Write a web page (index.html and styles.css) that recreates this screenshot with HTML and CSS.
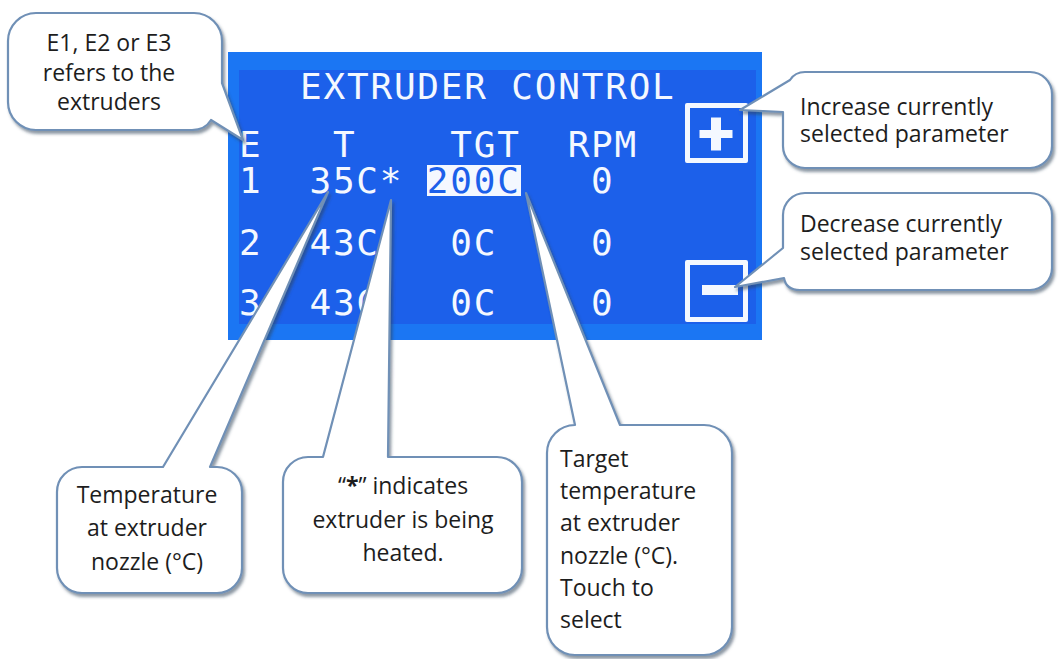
FILE: index.html
```html
<!DOCTYPE html>
<html>
<head>
<meta charset="utf-8">
<link rel="stylesheet" href="styles.css">
</head>
<body>
<div class="canvas">
  <div class="screen">
    <div class="panel">
      <div class="title">EXTRUDER CONTROL</div>
      <div class="body">
        <div class="table">
          <div class="row head">E   T    TGT  RPM</div>
          <div class="row r1">1  35C* <span class="sel">200C</span>   0</div>
          <div class="row r2">2  43C   0C    0</div>
          <div class="row r3">3  43C   0C    0</div>
        </div>
        <div class="keys">
          <div class="key plus">
            <svg width="53" height="50" viewBox="0 0 53 50"><rect x="9.5" y="22" width="33" height="8" fill="#f4f8ff"/><rect x="21" y="9.5" width="10" height="33" fill="#f4f8ff"/></svg>
          </div>
          <div class="key minus">
            <svg width="53" height="52" viewBox="0 0 53 52"><rect x="12" y="20" width="36" height="10" fill="#f4f8ff"/></svg>
          </div>
        </div>
      </div>
    </div>
  </div>

  <svg class="bubbles" width="1062" height="659" viewBox="0 0 1062 659">
    <defs>
      <filter id="sh" x="-10%" y="-10%" width="130%" height="130%">
        <feDropShadow dx="2" dy="3" stdDeviation="1.5" flood-color="#33445a" flood-opacity="0.55"/>
      </filter>
    </defs>
    <g fill="#ffffff" stroke="#7090b6" stroke-width="2.2" stroke-linejoin="round" filter="url(#sh)">
      <path d="M36 13 H194 A28 28 0 0 1 222 41 V83 L243 140 L211 120 Q205 130 192 130 H36 A28 28 0 0 1 8 102 V41 A28 28 0 0 1 36 13 Z"/>
      <path d="M805 72 H1030 A22 22 0 0 1 1052 94 V146 A22 22 0 0 1 1030 168 H805 A22 22 0 0 1 783 146 V112 L740 110 L790 80 Q795 72 805 72 Z"/>
      <path d="M805 193 H1030 A22 22 0 0 1 1052 215 V268 A22 22 0 0 1 1030 290 H800 Q786 290 784 278 L735 287 L783 248 V215 A22 22 0 0 1 805 193 Z"/>
      <path d="M82 467 H163 L328 192 L210 467 H217 A25 25 0 0 1 242 492 V568 A25 25 0 0 1 217 593 H82 A25 25 0 0 1 57 568 V492 A25 25 0 0 1 82 467 Z"/>
      <path d="M308 457 H323 L391 200 L388 457 H497 A25 25 0 0 1 522 482 V568 A25 25 0 0 1 497 593 H308 A25 25 0 0 1 283 568 V482 A25 25 0 0 1 308 457 Z"/>
      <path d="M575 425 L526 193 L620 425 H704 A28 28 0 0 1 732 453 V627 A28 28 0 0 1 704 655 H575 A28 28 0 0 1 547 627 V453 A28 28 0 0 1 575 425 Z"/>
    </g>
  </svg>

  <div class="note n-ext">E1, E2 or E3<br>refers to the<br>extruders</div>
  <div class="note n-inc">Increase currently<br>selected parameter</div>
  <div class="note n-dec">Decrease currently<br>selected parameter</div>
  <div class="note n-temp">Temperature<br>at extruder<br>nozzle (°C)</div>
  <div class="note n-star">“<b>*</b>” indicates<br>extruder is being<br>heated.</div>
  <div class="note n-tgt">Target<br>temperature<br>at extruder<br>nozzle (°C).<br>Touch to<br>select</div>
</div>
</body>
</html>
```

FILE: styles.css
```css
html, body {
  margin: 0;
  padding: 0;
  background: #ffffff;
}

.canvas {
  position: relative;
  width: 1062px;
  height: 659px;
  overflow: hidden;
  background: #ffffff;
}

.screen {
  margin: 52px 0 0 228px;
  width: 534px;
  box-sizing: border-box;
  padding: 18px 6px 16px 11px;
  background: #1b76f3;
}

.panel {
  background: #1c60ea;
  font-family: "DejaVu Sans Mono", "Liberation Mono", monospace;
  font-size: 36px;
  letter-spacing: 1.8px;
  color: #f4f8ff;
  padding-bottom: 2px;
}

.title {
  line-height: 33px;
  height: 33px;
  padding-left: 61px;
  white-space: pre;
}

.body {
  display: flex;
  height: 219px;
}

.table {
  flex: 1;
  padding-top: 23.5px;
}

.row {
  white-space: pre;
  line-height: 36px;
  height: 36px;
}

.r2 {
  margin-top: 26px;
}

.r3 {
  margin-top: 24px;
}

.sel {
  display: inline-block;
  height: 31px;
  line-height: 31px;
  background: #f4f8ff;
  color: #1c60ea;
}

.keys {
  width: 63px;
  margin-right: 8px;
  display: flex;
  flex-direction: column;
  justify-content: space-between;
}

.key {
  box-sizing: border-box;
  border: 5px solid #f4f8ff;
  border-radius: 2px;
}

.key svg {
  display: block;
}

.plus {
  height: 60px;
}

.minus {
  height: 62px;
}

.bubbles {
  position: absolute;
  left: 0;
  top: 0;
  pointer-events: none;
}

.note {
  position: absolute;
  font-family: "Open Sans", "Noto Sans", sans-serif;
  font-size: 23px;
  color: #1d1d1d;
  white-space: nowrap;
}

.note b {
  font-weight: 700;
}

.n-ext {
  left: 8px;
  width: 202px;
  top: 28px;
  line-height: 29.5px;
  text-align: center;
}

.n-inc {
  left: 800px;
  top: 92.5px;
  line-height: 27px;
}

.n-dec {
  left: 800px;
  top: 209px;
  line-height: 28px;
}

.n-temp {
  left: 57px;
  width: 180px;
  top: 477.5px;
  line-height: 33.5px;
  text-align: center;
}

.n-star {
  left: 283px;
  width: 240px;
  top: 469px;
  line-height: 33.5px;
  text-align: center;
}

.n-tgt {
  left: 560px;
  top: 442px;
  line-height: 32.2px;
}
```
